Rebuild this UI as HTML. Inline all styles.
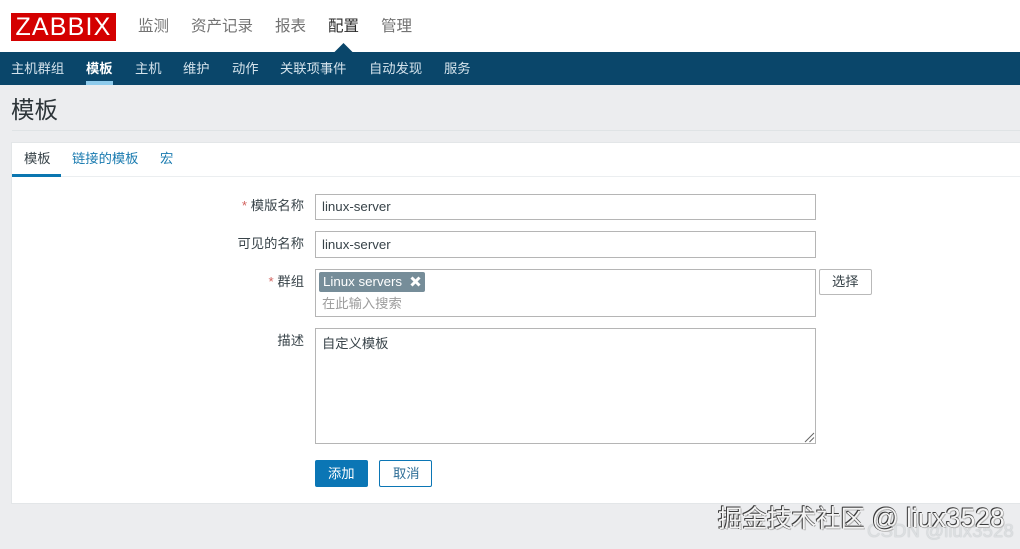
<!DOCTYPE html>
<html><head><meta charset="utf-8"><style>
html,body{margin:0;padding:0;width:1020px;height:549px;overflow:hidden;background:#ecedef}
body{position:relative;font-family:"Liberation Sans","Noto Sans CJK SC",sans-serif;font-size:13.3px;color:#1f2c33}
.a{position:absolute;white-space:nowrap;line-height:18px}
.b{position:absolute;box-sizing:border-box}
.n{font-size:15.5px;color:#737373;top:18px}
.s{font-size:13.3px;color:#d4e3ec;top:60px}
.l{text-align:right;right:716px}
.r{color:#d2635f}
.i{position:absolute;box-sizing:border-box;left:315px;width:501px;background:#fff;border:1px solid #b5b5b5}
.t{color:#384349}
</style></head><body>
<div class="b" style="left:0;top:0;width:1020px;height:52px;background:#fff"></div>
<div class="b" style="left:11px;top:13px;width:105px;height:28px;background:#d40000"></div>
<div class="a" style="left:11px;top:13px;width:105px;height:28px;line-height:29px;text-align:center;color:#fff;font-size:25px;letter-spacing:1.2px">ZABBIX</div>
<div class="a n" style="left:138px">监测</div>
<div class="a n" style="left:191px">资产记录</div>
<div class="a n" style="left:275px">报表</div>
<div class="a n" style="left:328px;color:#2b2b2b">配置</div>
<div class="a n" style="left:381px">管理</div>
<div class="b" style="left:0;top:52px;width:1020px;height:33px;background:#0a466a"></div>
<svg class="b" style="left:333px;top:42px" width="21" height="11"><path d="M0.500 11L10.500 1L20.500 11Z" fill="#0a466a"/></svg>
<div class="a s" style="left:11px">主机群组</div>
<div class="a s" style="left:86px;color:#fff;font-weight:bold">模板</div>
<div class="b" style="left:86px;top:81px;width:27px;height:4px;background:#8ecbec"></div>
<div class="a s" style="left:135px">主机</div>
<div class="a s" style="left:183px">维护</div>
<div class="a s" style="left:232px">动作</div>
<div class="a s" style="left:280px">关联项事件</div>
<div class="a s" style="left:369px">自动发现</div>
<div class="a s" style="left:444px">服务</div>
<div class="a" style="left:11px;top:95px;font-size:23.500px;line-height:30px;color:#2c3438">模板</div>
<div class="b" style="left:12px;top:130px;width:1008px;height:1px;background:#dfe3e5"></div>
<div class="b" style="left:11px;top:142px;width:1009px;height:362px;background:#fff;border:1px solid #e3e6e8;border-right:0"></div>
<div class="b" style="left:12px;top:176px;width:1008px;height:1px;background:#ebeef0"></div>
<div class="b" style="left:12px;top:174px;width:49px;height:3px;background:#0b76b0"></div>
<div class="a t" style="left:24px;top:150px">模板</div>
<div class="a" style="left:72px;top:150px;color:#1a7bb0">链接的模板</div>
<div class="a" style="left:160px;top:150px;color:#1a7bb0">宏</div>
<div class="a l t" style="top:197px"><span class="r">*</span> 模版名称</div>
<div class="i" style="top:194px;height:26px"></div>
<div class="a t" style="left:322px;top:198px">linux-server</div>
<div class="a l t" style="top:235px">可见的名称</div>
<div class="i" style="top:231px;height:27px"></div>
<div class="a t" style="left:322px;top:236px">linux-server</div>
<div class="a l t" style="top:273px"><span class="r">*</span> 群组</div>
<div class="i" style="top:269px;height:48px"></div>
<div class="b" style="left:319px;top:272px;width:106px;height:20px;background:#768d99;border-radius:2px"></div>
<div class="a" style="left:323px;top:273px;color:#fff">Linux servers</div>
<svg class="b" style="left:409px;top:275px" width="13" height="13"><path d="M2.500 2.500L10.500 10.500M10.500 2.500L2.500 10.500" stroke="#fff" stroke-width="3"/></svg>
<div class="a" style="left:322px;top:295px;color:#9d9d9d">在此输入搜索</div>
<div class="b" style="left:819px;top:269px;width:53px;height:26px;background:#fff;border:1px solid #b9b9b9;border-radius:2px"></div>
<div class="a t" style="left:832px;top:273px">选择</div>
<div class="a l t" style="top:332px">描述</div>
<div class="i" style="top:328px;height:116px"></div>
<div class="a t" style="left:322px;top:335px">自定义模板</div>
<svg class="b" style="left:804px;top:432px" width="11" height="11"><path d="M1 10L10 1M5.500 10L10 5.500" stroke="#666" stroke-width="1"/></svg>
<div class="b" style="left:315px;top:460px;width:53px;height:27px;background:#0b76b5;border-radius:2px"></div>
<div class="a" style="left:328px;top:465px;color:#fff">添加</div>
<div class="b" style="left:379px;top:460px;width:53px;height:27px;background:#fff;border:1px solid #0b76b5;border-radius:2px"></div>
<div class="a" style="left:393px;top:465px;color:#2d6d96">取消</div>
<div class="a" style="left:867px;top:520px;font-size:18.700px;line-height:22px;color:#dcdfe1;text-shadow:0 0 1px #aeb2b5">CSDN @liux3528</div>
<div class="a" style="left:718px;top:504px;font-size:24.500px;line-height:28px;color:#f4f4f4;text-shadow:-1px -1px 0 #3c3c3c,0 -1px 0 #555,-1px 0 0 #555,1px 1px 0 #bbb">掘金技术社区 <span style="font-size:26.500px">@ liux3528</span></div>
</body></html>
